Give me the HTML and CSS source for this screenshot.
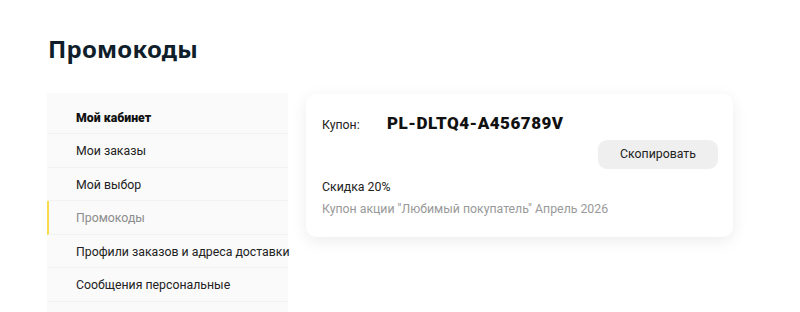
FILE: index.html
```html
<!DOCTYPE html>
<html>

<head>
    <meta charset="UTF-8">
    <title>Промокоды</title>
    <link rel="stylesheet" href="styles.css">
</head>

<body>
    <div class="page">
        <h1 class="title">Промокоды</h1>
        <div class="layout">
            <ul class="menu">
                <li class="menu-item menu-head">Мой кабинет</li>
                <li class="menu-item">Мои заказы</li>
                <li class="menu-item">Мой выбор</li>
                <li class="menu-item active">Промокоды</li>
                <li class="menu-item">Профили заказов и адреса доставки</li>
                <li class="menu-item">Сообщения персональные</li>
                <li class="menu-item menu-tail"></li>
            </ul>

            <div class="coupon">
                <div class="coupon-row">
                    <span class="coupon-label">Купон:</span>
                    <span class="coupon-code">PL-DLTQ4-A456789V</span>
                </div>
                <div class="coupon-actions">
                    <span class="btn-copy">Скопировать</span>
                </div>
                <div class="coupon-sale">Скидка 20%</div>
                <div class="coupon-desc">Купон акции "Любимый покупатель" Апрель 2026</div>
            </div>
        </div>
    </div>
</body>

</html>
```

FILE: styles.css
```css
* {
    margin: 0;
    padding: 0;
    box-sizing: border-box;
}

body {
    background: #fff;
    font-family: Roboto, "Liberation Sans", sans-serif;
    font-size: 12.3px;
    color: #222;
}

.page {
    height: 312px;
    overflow: hidden;
    padding: 34px 0 0 47px;
}

.title {
    font-family: "Noto Sans", "Open Sans", sans-serif;
    font-size: 24px;
    line-height: 30px;
    font-weight: 700;
    color: #0f1e2a;
    padding-left: 1px;
    letter-spacing: 0.2px;
    margin-bottom: 29px;
}

.layout {
    display: flex;
    align-items: flex-start;
    gap: 18px;
}

.menu {
    width: 241px;
    list-style: none;
    background: #fafafa;
}

.menu-item {
    padding: 9px 0 7px 27px;
    line-height: 16.5px;
    height: 33.5px;
    border-bottom: 1px solid #f2f2f2;
    border-left: 2px solid transparent;
    white-space: nowrap;
}

.menu-head {
    font-weight: 900;
    color: #111;
    padding-top: 17px;
    height: 41px;
}

.menu-tail {
    height: 10px;
    border-bottom: none;
}

.active {
    border-left-color: #f7dc4a;
    color: #8c8c8c;
}

.coupon {
    width: 427px;
    margin-top: 1px;
    background: #fff;
    border-radius: 10px;
    box-shadow: 0 4px 16px rgba(0, 0, 0, 0.08);
    padding: 19px 16px 20px 16px;
}

.coupon-row {
    display: flex;
    align-items: baseline;
}

.coupon-label {
    width: 65px;
}

.coupon-code {
    font-size: 17px;
    font-weight: 900;
    color: #111;
    letter-spacing: 0.5px;
}

.coupon-actions {
    display: flex;
    justify-content: flex-end;
    margin-top: 7px;
    margin-right: -1px;
}

.btn-copy {
    width: 120px;
    height: 29px;
    line-height: 29px;
    text-align: center;
    border-radius: 9px;
    background: #efefef;
    color: #222;
}

.coupon-sale {
    margin-top: 10px;
    line-height: 16px;
}

.coupon-desc {
    margin-top: 6px;
    line-height: 16px;
    color: #999;
}
```
